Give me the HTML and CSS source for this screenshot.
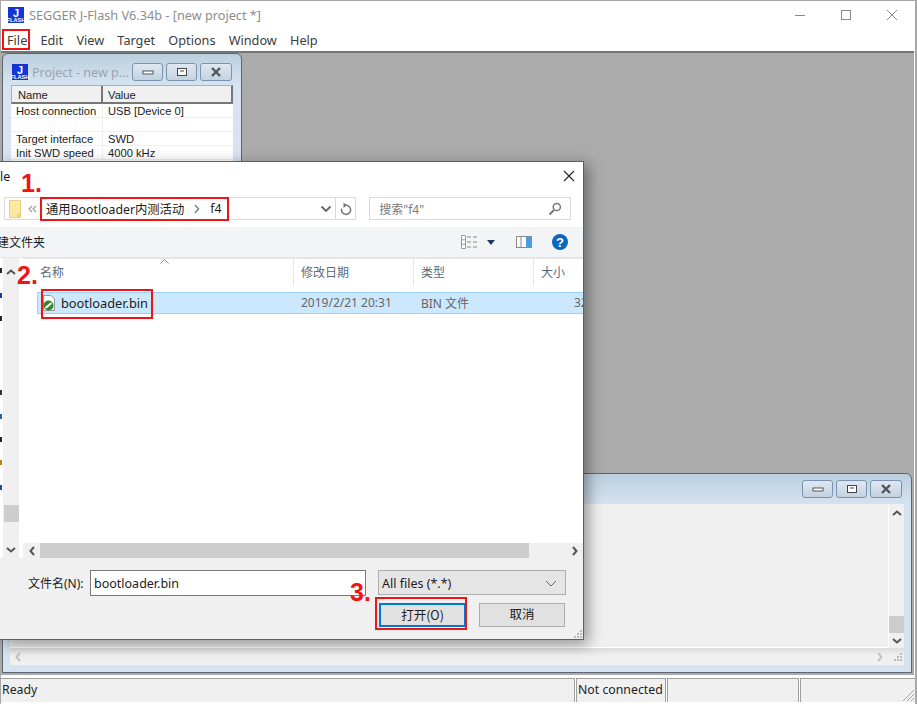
FILE: index.html
```html
<!DOCTYPE html>
<html lang="en">

<head>
    <meta charset="UTF-8">
    <title>SEGGER J-Flash V6.34b - [new project *]</title>
    <link rel="stylesheet" href="styles.css">
</head>

<body>
    <div class="app">

        <!-- Main window -->
        <header class="titlebar">
            <svg class="logo" viewBox="0 0 16 16">
                <rect width="16" height="16" fill="#1436d8" />
                <text x="8" y="9.5" class="logo-j">J</text>
                <text x="8" y="15.4" class="logo-flash">FLASH</text>
            </svg>
            <span class="app-title">SEGGER J-Flash V6.34b - [new project *]</span>
            <div class="app-controls">
                <span class="app-control"><svg width="12" height="12" viewBox="0 0 12 12"><path d="M1 6.5h10" stroke="#8a8a8a" fill="none" /></svg></span>
                <span class="app-control"><svg width="12" height="12" viewBox="0 0 12 12"><rect x="1.5" y="1.5" width="9" height="9" stroke="#8a8a8a" fill="none" /></svg></span>
                <span class="app-control"><svg width="12" height="12" viewBox="0 0 12 12"><path d="M1 1l10 10M11 1L1 11" stroke="#8a8a8a" fill="none" /></svg></span>
            </div>
        </header>

        <nav class="menubar">
            <span>File</span>
            <span>Edit</span>
            <span>View</span>
            <span>Target</span>
            <span>Options</span>
            <span>Window</span>
            <span>Help</span>
        </nav>

        <main class="mdi">
            <!-- Project child window -->
            <section class="child project">
                <div class="child-title">
                    <svg class="logo project-logo" viewBox="0 0 16 16">
                        <rect width="16" height="16" fill="#1436d8" />
                        <text x="8" y="9.5" class="logo-j">J</text>
                        <text x="8" y="15.4" class="logo-flash">FLASH</text>
                    </svg>
                    <span class="child-name">Project - new p...</span>
                    <div class="child-buttons">
                        <span class="child-btn"><svg width="12" height="8" viewBox="0 0 12 8"><rect x="1" y="3" width="10" height="3" fill="#fff" stroke="#555" /></svg></span>
                        <span class="child-btn"><svg width="12" height="10" viewBox="0 0 12 10"><rect x="1.5" y="1.5" width="9" height="7" fill="#fff" stroke="#444" /><path d="M4 4h4" stroke="#444" /></svg></span>
                        <span class="child-btn"><svg width="12" height="10" viewBox="0 0 12 10"><path d="M2 1l8 8M10 1L2 9" stroke="#555" stroke-width="2.4" fill="none" /></svg></span>
                    </div>
                </div>
                <div class="props">
                    <div class="props-head">
                        <span class="props-name">Name</span>
                        <span class="props-value">Value</span>
                    </div>
                    <div class="props-row"><span class="props-key">Host connection</span><span>USB [Device 0]</span></div>
                    <div class="props-row"><span class="props-key"></span><span></span></div>
                    <div class="props-row"><span class="props-key">Target interface</span><span>SWD</span></div>
                    <div class="props-row"><span class="props-key">Init SWD speed</span><span>4000 kHz</span></div>
                </div>
            </section>

            <!-- Log child window -->
            <section class="child log">
                <div class="child-title log-title">
                    <div class="child-buttons">
                        <span class="child-btn"><svg width="12" height="8" viewBox="0 0 12 8"><rect x="1" y="3" width="10" height="3" fill="#fff" stroke="#555" /></svg></span>
                        <span class="child-btn"><svg width="12" height="10" viewBox="0 0 12 10"><rect x="1.5" y="1.5" width="9" height="7" fill="#fff" stroke="#444" /><path d="M4 4h4" stroke="#444" /></svg></span>
                        <span class="child-btn"><svg width="12" height="10" viewBox="0 0 12 10"><path d="M2 1l8 8M10 1L2 9" stroke="#555" stroke-width="2.4" fill="none" /></svg></span>
                    </div>
                </div>
                <div class="log-client">
                    <div class="log-main">
                        <div class="log-text"></div>
                        <div class="log-vscroll">
                            <svg class="chev" width="10" height="6" viewBox="0 0 10 6"><path d="M1 5l4-3.5L9 5" stroke="#555" stroke-width="2" fill="none" /></svg>
                            <span class="log-thumb"></span>
                            <svg class="chev" width="10" height="6" viewBox="0 0 10 6"><path d="M1 1l4 3.5L9 1" stroke="#555" stroke-width="2" fill="none" /></svg>
                        </div>
                    </div>
                    <div class="log-hscroll">
                        <svg width="6" height="10" viewBox="0 0 6 10"><path d="M5 1L1.5 5 5 9" stroke="#c4c4c4" stroke-width="2" fill="none" /></svg>
                        <svg class="log-right" width="6" height="10" viewBox="0 0 6 10"><path d="M1 1l3.5 4L1 9" stroke="#c4c4c4" stroke-width="2" fill="none" /></svg>
                        <svg class="grip" width="8" height="8" viewBox="0 0 8 8"><path d="M6 0h2v2H6zM3 3h2v2H3zM6 3h2v2H6zM0 6h2v2H0zM3 6h2v2H3zM6 6h2v2H6z" fill="#bbb" /></svg>
                    </div>
                </div>
            </section>
        </main>

        <footer class="statusbar">
            <div class="cell cell-ready">Ready</div>
            <div class="cell cell-conn">Not connected</div>
            <div class="cell cell-blank"></div>
            <div class="cell cell-last">
                <svg class="status-grip" width="14" height="14" viewBox="0 0 14 14"><path d="M13 2L2 13M13 6l-7 7M13 10l-3 3" stroke="#a8a8a8" fill="none" /></svg>
            </div>
        </footer>

        <!-- Open file dialog -->
        <div class="dialog">
            <div class="dlg-title">
                <span>le</span>
                <svg width="12" height="12" viewBox="0 0 12 12"><path d="M1 1l10 10M11 1L1 11" stroke="#222" stroke-width="1.1" fill="none" /></svg>
            </div>

            <div class="dlg-nav">
                <div class="address">
                    <svg class="folder" width="12" height="18" viewBox="0 0 12 18">
                        <path d="M.5.5h11v17H.5z" fill="#ffe9a0" stroke="#e6cf85" />
                        <path d="M8 13h3.500v4.500H8z" fill="#f1d67e" />
                    </svg>
                    <svg class="crumb-more" width="9" height="8" viewBox="0 0 9 8"><path d="M4 .8L1 4l3 3.200M8 .8L5 4l3 3.200" stroke="#999" stroke-width="1.2" fill="none" /></svg>
                    <span class="crumb">通用Bootloader内测活动</span>
                    <svg class="crumb-sep" width="6" height="10" viewBox="0 0 6 10"><path d="M1 1l3.500 4L1 9" stroke="#888" stroke-width="1.600" fill="none" /></svg>
                    <span class="crumb">f4</span>
                    <svg class="address-down" width="12" height="8" viewBox="0 0 12 8"><path d="M1.500 1.500L6 6l4.500-4.500" stroke="#666" stroke-width="1.800" fill="none" /></svg>
                    <span class="refresh">
                        <svg width="12" height="14" viewBox="0 0 12 14"><path d="M6 3.200a4.600 4.600 0 1 1-4.400 3.400" stroke="#777" stroke-width="1.500" fill="none" /><path d="M3.500 0.500L7 3.200 3.500 6z" fill="#777" /></svg>
                    </span>
                </div>
                <div class="search">
                    <span>搜索"f4"</span>
                    <svg width="14" height="14" viewBox="0 0 14 14"><circle cx="8.800" cy="5" r="3.600" stroke="#777" stroke-width="1.500" fill="none" /><path d="M6 8L1.500 12.500" stroke="#777" stroke-width="2" /></svg>
                </div>
            </div>

            <div class="dlg-tools">
                <span class="new-folder">建文件夹</span>
                <svg class="view-icon" width="17" height="14" viewBox="0 0 17 14">
                    <path d="M.5.5h4v13h-4zM.5 4.800h4M.5 9.200h4" stroke="#999" fill="#fff" />
                    <path d="M6 2h4M12 2h4M6 7h4M12 7h4M6 12h4M12 12h4" stroke="#888" />
                </svg>
                <svg class="view-down" width="8" height="5" viewBox="0 0 8 5"><path d="M0 0h8L4 5z" fill="#1f3a5f" /></svg>
                <svg class="pane-icon" width="16" height="12" viewBox="0 0 16 12">
                    <rect x=".5" y=".5" width="15" height="11" fill="#fff" stroke="#8a8a8a" />
                    <path d="M5 1v10" stroke="#8a8a8a" />
                    <rect x="10" y="1" width="5" height="10" fill="#4a9be0" />
                </svg>
                <span class="help">?</span>
            </div>

            <div class="browser">
                <div class="gutter"></div>
                <div class="tree-scroll">
                    <svg width="10" height="6" viewBox="0 0 10 6"><path d="M1 5l4-3.500L9 5" stroke="#555" stroke-width="2" fill="none" /></svg>
                    <span class="tree-thumb"></span>
                    <svg width="10" height="6" viewBox="0 0 10 6"><path d="M1 1l4 3.500L9 1" stroke="#555" stroke-width="2" fill="none" /></svg>
                </div>
                <div class="files">
                    <div class="files-head">
                        <svg class="sort" width="9" height="5" viewBox="0 0 9 5"><path d="M.5 4.500l4-4 4 4" stroke="#888" fill="none" /></svg>
                        <span class="col col-name">名称</span>
                        <span class="col col-date">修改日期</span>
                        <span class="col col-type">类型</span>
                        <span class="col col-size">大小</span>
                    </div>
                    <div class="file-row">
                        <span class="file-name">
                            <svg width="12" height="16" viewBox="0 0 12 16">
                                <path d="M.5.5h7.500l3.500 3.500v11.500H.5z" fill="#fff" stroke="#999" />
                                <circle cx="5.500" cy="10.500" r="5" fill="#2b8a2b" />
                                <path d="M2.500 13l6-5" stroke="#fff" stroke-width="2" />
                            </svg>
                            bootloader.bin
                        </span>
                        <span class="file-date">2019/2/21 20:31</span>
                        <span class="file-type">BIN 文件</span>
                        <span class="file-size">32 KB</span>
                    </div>
                    <div class="files-space"></div>
                    <div class="files-hscroll">
                        <span class="hbtn"><svg width="6" height="10" viewBox="0 0 6 10"><path d="M5 1L1.500 5 5 9" stroke="#555" stroke-width="2" fill="none" /></svg></span>
                        <span class="hthumb"></span>
                        <span class="hbtn"><svg width="6" height="10" viewBox="0 0 6 10"><path d="M1 1l3.500 4L1 9" stroke="#555" stroke-width="2" fill="none" /></svg></span>
                    </div>
                </div>
            </div>

            <div class="dlg-foot">
                <div class="foot-row">
                    <label class="foot-label">文件名(N):</label>
                    <div class="foot-input">bootloader.bin</div>
                    <div class="foot-select">
                        <span>All files (*.*)</span>
                        <svg width="12" height="7" viewBox="0 0 12 7"><path d="M1 1l5 5 5-5" stroke="#666" fill="none" /></svg>
                    </div>
                </div>
                <div class="foot-buttons">
                    <button class="dlg-btn dlg-btn-main">打开(O)</button>
                    <button class="dlg-btn dlg-btn-cancel">取消</button>
                </div>
                <svg class="dlg-grip" width="8" height="8" viewBox="0 0 8 8"><path d="M6 0h2v2H6zM3 3h2v2H3zM6 3h2v2H6zM0 6h2v2H0zM3 6h2v2H3zM6 6h2v2H6z" fill="#bbb" /></svg>
            </div>
        </div>

        <!-- Red marks drawn on top of the screenshot -->
        <div class="mark mark-file"></div>
        <div class="mark mark-path"></div>
        <div class="mark mark-bin"></div>
        <div class="mark mark-open"></div>
        <span class="step step-1">1.</span>
        <span class="step step-2">2.</span>
        <span class="step step-3">3.</span>
    </div>
</body>

</html>
```

FILE: styles.css
```css
/* General Reset */
* {
    box-sizing: border-box;
}

body {
    margin: 0;
    font-family: "Noto Sans", "Noto Sans CJK SC", sans-serif;
    font-size: 12.5px;
    color: #1c1c1c;
    background: #ffffff;
}

/* frame is a shadow, not a border, so the dialog can cover it */
.app {
    position: relative;
    width: 917px;
    height: 704px;
    overflow: hidden;
    display: flex;
    flex-direction: column;
    padding: 1px 2px 0 1px;
    box-shadow: inset 1px 1px 0 #a8a8a8, inset -2px 0 0 #a8a8a8;
}

/* Title and menu */
.titlebar {
    display: flex;
    align-items: center;
    height: 28px;
    padding-left: 7px;
    flex-shrink: 0;
}

.logo {
    width: 16px;
    height: 16px;
    flex-shrink: 0;
    overflow: visible;
}

.project-logo {
    margin-left: 1px;
}

.logo-j {
    font-family: "Liberation Sans", sans-serif;
    font-size: 11px;
    font-weight: bold;
    fill: #ffffff;
    text-anchor: middle;
}

.logo-flash {
    font-family: "Liberation Sans", sans-serif;
    font-size: 5.6px;
    font-weight: bold;
    fill: #ffffff;
    text-anchor: middle;
}

.app-title {
    margin-left: 5px;
    font-size: 12.7px;
    color: #8d8d8d;
}

.app-controls {
    display: flex;
    margin-left: auto;
}

.app-control {
    display: flex;
    justify-content: center;
    align-items: center;
    width: 46px;
    height: 28px;
}

.menubar {
    display: flex;
    align-items: center;
    gap: 13.2px;
    height: 22px;
    padding-left: 6px;
    flex-shrink: 0;
    font-size: 12.7px;
    color: #3c3c3c;
}

/* MDI area */
.mdi {
    position: relative;
    height: 624px;
    flex-shrink: 0;
    background: #ababab;
    border-top: 2px solid #757575;
    margin-right: 1px;
}

.child {
    position: absolute;
    display: flex;
    flex-direction: column;
    border: 1px solid #5d6670;
    border-radius: 6px 6px 0 0;
    background: linear-gradient(#bccfdf, #d6e4f1 32px);
}

.project {
    top: 0;
    left: 1px;
    width: 240px;
    height: 140px;
    padding: 0 8px;
}

.log {
    top: 420px;
    left: 1px;
    width: 910px;
    height: 200px;
    padding: 0 7px 7px;
}

.child-title {
    display: flex;
    align-items: center;
    height: 31px;
    padding-top: 5px;
    flex-shrink: 0;
    color: #9aa5b0;
}

.log-title {
    height: 30px;
    padding-top: 0;
}

.log-title .child-buttons {
    margin-right: 2px;
}

.child-name {
    margin-left: 4px;
    font-size: 12.5px;
}

.child-buttons {
    display: flex;
    gap: 3px;
    margin-left: auto;
    margin-right: 1px;
}

.child-btn {
    display: flex;
    justify-content: center;
    align-items: center;
    width: 31px;
    height: 18px;
    border: 1px solid #7d93ad;
    border-radius: 3px;
    background: linear-gradient(#dfe8f1, #c3d2e1);
}

.child-btn:last-child {
    width: 32px;
}

/* Properties table */
.props {
    background: #ffffff;
    font-family: "Liberation Sans", sans-serif;
    font-size: 11.2px;
    white-space: nowrap;
    flex: 1;
}

.props-head {
    display: flex;
    height: 19px;
    background: #f0f0f0;
    border-top: 1px solid #b0b0b0;
    border-bottom: 2px solid #777777;
    border-left: 1px solid #b0b0b0;
    border-right: 2px solid #777777;
    line-height: 18px;
}

.props-name {
    width: 91px;
    padding-left: 6px;
    border-right: 2px solid #777777;
}

.props-value {
    padding-left: 5px;
}

.props-row {
    display: flex;
    height: 14px;
    line-height: 15px;
    border-bottom: 1px solid #f0f0f0;
}

.props-key {
    width: 92px;
    padding-left: 5px;
    overflow: hidden;
    border-right: 1px solid #f0f0f0;
}

.props-row span:last-child {
    padding-left: 5px;
}

/* Log window */
.log-client {
    flex: 1;
    display: flex;
    flex-direction: column;
    min-height: 0;
}

.log-main {
    flex: 1;
    display: flex;
    min-height: 0;
}

.log-text {
    flex: 1;
    background: #f0f0f0;
    border-bottom: 1px solid #ffffff;
}

.log-vscroll {
    display: flex;
    flex-direction: column;
    align-items: center;
    width: 16px;
    padding: 6px 0 4px;
    background: #f0f0f0;
    border-left: 1px solid #ffffff;
}

.log-thumb {
    width: 15px;
    height: 17px;
    margin-top: auto;
    margin-bottom: 5px;
    background: #cdcdcd;
}

.log-hscroll {
    display: flex;
    align-items: center;
    height: 17px;
    padding: 0 2px 0 5px;
    flex-shrink: 0;
    background: linear-gradient(#dcdcdc, #f0f0f0 8px);
}

.log-right {
    margin-left: auto;
    margin-right: 11px;
}

/* Status bar */
.statusbar {
    display: flex;
    height: 27px;
    padding-top: 3px;
    flex-shrink: 0;
    background: #ffffff;
}

.cell {
    height: 24px;
    line-height: 22px;
    background: #f0f0f0;
    border-top: 1px solid #a0a0a0;
    border-right: 1px solid #a0a0a0;
    margin-right: 1px;
    font-size: 12.3px;
    color: #1e1e1e;
}

.cell-ready {
    width: 574px;
    padding-left: 1px;
}

.cell-conn {
    width: 90px;
    padding-left: 1px;
    white-space: nowrap;
    overflow: hidden;
    border-left: 1px solid #a0a0a0;
}

.cell-blank {
    width: 132px;
    border-left: 1px solid #a0a0a0;
}

.cell-last {
    flex: 1;
    position: relative;
    margin-right: 0;
    border-right: none;
    border-left: 1px solid #a0a0a0;
}

.status-grip {
    position: absolute;
    right: 0;
    bottom: 0;
}

/* Open dialog */
.dialog {
    position: absolute;
    top: 161px;
    left: 0;
    width: 584px;
    height: 479px;
    display: flex;
    flex-direction: column;
    background: #ffffff;
    border-top: 1px solid #5f5f5f;
    border-right: 1px solid #5f5f5f;
    border-bottom: 1px solid #5f5f5f;
    box-shadow: 4px 4px 14px rgba(0, 0, 0, 0.4);
}

.dlg-title {
    display: flex;
    justify-content: space-between;
    align-items: center;
    height: 28px;
    padding: 0 8px 0 0;
    flex-shrink: 0;
    font-size: 12.5px;
}

.dlg-nav {
    display: flex;
    gap: 13px;
    height: 37px;
    padding: 7px 12px 7px 4px;
    flex-shrink: 0;
}

.address {
    display: flex;
    align-items: center;
    width: 353px;
    border: 1px solid #d9d9d9;
    font-size: 12.3px;
}

.folder {
    margin-left: 4px;
}

.crumb-more {
    margin-left: 7px;
    margin-right: 9px;
}

.crumb-sep {
    margin: 0 10px;
}

.address-down {
    margin-left: auto;
    margin-right: 3px;
}

.refresh {
    display: flex;
    justify-content: center;
    align-items: center;
    width: 20px;
    height: 100%;
    border-left: 1px solid #d9d9d9;
}

.search {
    display: flex;
    justify-content: space-between;
    align-items: center;
    width: 202px;
    padding: 0 8px 0 9px;
    border: 1px solid #d9d9d9;
    font-size: 12px;
    color: #7a7a7a;
}

.dlg-tools {
    display: flex;
    align-items: center;
    height: 31px;
    flex-shrink: 0;
    background: #f3f4f6;
    border-bottom: 1px solid #e4e4e4;
    font-size: 12px;
}

.new-folder {
    margin-left: -3px;
}

.view-icon {
    margin-left: 416px;
}

.view-down {
    margin-left: 9px;
}

.pane-icon {
    margin-left: 21px;
}

.help {
    display: flex;
    justify-content: center;
    align-items: center;
    width: 16px;
    height: 16px;
    margin-left: 20px;
    border-radius: 50%;
    background: #0a67be;
    color: #ffffff;
    font-family: "Liberation Sans", sans-serif;
    font-size: 13px;
    font-weight: bold;
}

.browser {
    flex: 1;
    display: flex;
    min-height: 0;
}

.gutter {
    width: 3px;
    background-color: #ffffff;
    background-repeat: no-repeat;
    background-image:
        linear-gradient(#222222, #222222),
        linear-gradient(#0d3d9c, #0d3d9c),
        linear-gradient(#222222, #222222),
        linear-gradient(#333333, #333333),
        linear-gradient(#2b5fa0, #2b5fa0),
        linear-gradient(#222222, #222222),
        linear-gradient(#c47a14, #c47a14),
        linear-gradient(#1c4f9c, #1c4f9c);
    background-size: 2px 5px;
    background-position: 0 10px, 0 35px, 0 58px, 0 132px, 0 156px, 0 179px, 0 202px, 0 227px;
}

.tree-scroll {
    display: flex;
    flex-direction: column;
    align-items: center;
    width: 16px;
    padding: 11px 0 5px;
    background: #f0f0f0;
}

.tree-thumb {
    width: 15px;
    height: 17px;
    margin-top: auto;
    margin-bottom: 25px;
    background: #cdcdcd;
}

.files {
    flex: 1;
    display: flex;
    flex-direction: column;
    margin-left: 4px;
    min-width: 0;
    font-size: 12px;
}

.files-head {
    position: relative;
    display: flex;
    height: 28px;
    flex-shrink: 0;
    border-top: 1px solid #e5e5e5;
    color: #5a6b80;
}

.sort {
    position: absolute;
    top: 0;
    left: 137px;
}

.col {
    padding: 3px 0 0 7px;
    border-right: 1px solid #e5e5e5;
    line-height: 22px;
}

.col-name {
    width: 271px;
    padding-left: 17px;
}

.col-date,
.col-type {
    width: 120px;
}

.col-size {
    border-right: none;
}

.file-row {
    display: flex;
    align-items: center;
    height: 22px;
    margin: 6px 0 0 14px;
    padding-bottom: 1px;
    flex-shrink: 0;
    overflow: hidden;
    white-space: nowrap;
    background: #cce8ff;
    border-top: 1px solid #99d1ff;
    border-bottom: 1px solid #99d1ff;
    border-left: 1px solid #99d1ff;
    color: #666666;
}

.file-row span {
    flex-shrink: 0;
}

.file-name {
    display: flex;
    align-items: center;
    gap: 6px;
    width: 256px;
    padding-left: 5px;
    font-size: 12.8px;
    color: #1c1c1c;
}

.file-date {
    width: 120px;
    padding-left: 7px;
}

.file-type {
    width: 160px;
    padding-left: 7px;
}

.files-space {
    flex: 1;
}

.files-hscroll {
    display: flex;
    height: 15px;
    flex-shrink: 0;
    background: #f0f0f0;
}

.hbtn {
    display: flex;
    justify-content: center;
    align-items: center;
    width: 17px;
}

.hthumb {
    width: 489px;
    background: #cdcdcd;
    margin-right: auto;
}

.dlg-foot {
    position: relative;
    height: 81px;
    flex-shrink: 0;
    padding-top: 12px;
    background: #f0f0f0;
}

.foot-row {
    display: flex;
    align-items: flex-start;
}

.foot-label {
    width: 90px;
    padding-left: 28px;
    line-height: 27px;
    font-size: 12px;
    white-space: nowrap;
}

.foot-input {
    width: 276px;
    height: 26px;
    padding-left: 3px;
    line-height: 25px;
    background: #ffffff;
    border: 1px solid #7a7a7a;
    font-size: 12.5px;
}

.foot-select {
    display: flex;
    justify-content: space-between;
    align-items: center;
    width: 188px;
    height: 25px;
    margin-left: 12px;
    padding: 1px 8px 0 3px;
    background: #e5e5e5;
    border: 1px solid #adadad;
    font-size: 12.5px;
}

.foot-buttons {
    display: flex;
    justify-content: flex-end;
    gap: 13px;
    margin-top: 6px;
    padding-right: 18px;
}

.dlg-btn {
    height: 24px;
    padding: 0 0 3px;
    background: #e1e1e1;
    border: 1px solid #adadad;
    font-family: "Noto Sans CJK SC", sans-serif;
    font-size: 12.5px;
    color: #1c1c1c;
}

.dlg-btn-main {
    width: 87px;
    border: 2px solid #0078d7;
}

.dlg-btn-cancel {
    width: 86px;
}

.dlg-grip {
    position: absolute;
    right: 1px;
    bottom: 1px;
}

/* Annotations */
.mark {
    position: absolute;
    border: 2px solid #f01414;
}

.mark-file {
    top: 29px;
    left: 2px;
    width: 28px;
    height: 21px;
}

.mark-path {
    top: 197px;
    left: 40px;
    width: 189px;
    height: 24px;
}

.mark-bin {
    top: 289px;
    left: 41px;
    width: 112px;
    height: 30px;
}

.mark-open {
    top: 597px;
    left: 375px;
    width: 92px;
    height: 33px;
}

.step {
    position: absolute;
    font-family: "Liberation Sans", sans-serif;
    font-size: 25px;
    font-weight: bold;
    line-height: 25px;
    color: #f01414;
}

.step-1 {
    top: 171px;
    left: 21px;
}

.step-2 {
    top: 263px;
    left: 17px;
}

.step-3 {
    top: 580px;
    left: 350px;
}
```
